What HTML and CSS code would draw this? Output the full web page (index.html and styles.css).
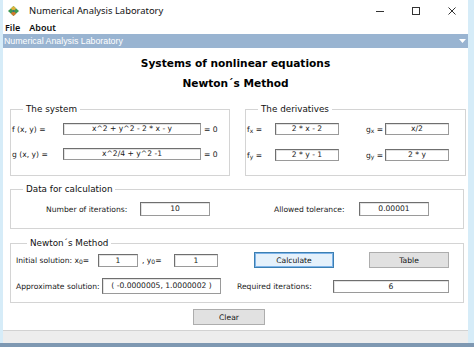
FILE: index.html
```html
<!DOCTYPE html>
<html lang="en">
<head>
    <meta charset="UTF-8">
    <title>Numerical Analysis Laboratory</title>
    <link rel="stylesheet" href="styles.css">
</head>
<body>
    <div class="frame">
        <div class="titlebar">
            <svg class="app-icon" width="11" height="10" viewBox="0 0 11 10">
                <polygon points="5.5,0 11,5 5.5,10 0,5" fill="#3f9a52"/>
                <polygon points="5.5,0 8.2,2.5 5.5,5 2.8,2.5" fill="#e0b43c"/>
                <polygon points="5.5,5 8.2,7.5 5.5,10 2.8,7.5" fill="#d27a2e"/>
                <polygon points="5.5,3.8 6.7,5 5.5,6.2 4.3,5" fill="#2f6e8c"/>
            </svg>
            <span class="app-title">Numerical Analysis Laboratory</span>
            <div class="win-controls">
                <svg width="10" height="10" viewBox="0 0 10 10"><line x1="1" y1="5.5" x2="9" y2="5.5" stroke="#333" stroke-width="1"/></svg>
                <svg width="10" height="10" viewBox="0 0 10 10"><rect x="1.5" y="1.5" width="7" height="7" fill="none" stroke="#333" stroke-width="1"/></svg>
                <svg width="10" height="10" viewBox="0 0 10 10"><path d="M1.5 1.5 L8.5 8.5 M8.5 1.5 L1.5 8.5" stroke="#333" stroke-width="1"/></svg>
            </div>
        </div>

        <div class="menubar">
            <span>File</span>
            <span>About</span>
        </div>

        <div class="caption">
            <span>Numerical Analysis Laboratory</span>
            <svg width="7" height="5" viewBox="0 0 7 5"><polygon points="0,0 7,0 3.5,4" fill="#fff"/></svg>
        </div>

        <div class="main">
            <h1>Systems of nonlinear equations</h1>
            <h2>Newton´s Method</h2>

            <div class="top-row">
                <fieldset class="group system">
                    <legend>The system</legend>
                    <div class="row first">
                        <span class="lbl">f (x, y) =</span>
                        <span class="box">x^2 + y^2 - 2 * x - y</span>
                        <span class="suffix">= 0</span>
                    </div>
                    <div class="row second">
                        <span class="lbl">g (x, y) =</span>
                        <span class="box">x^2/4 + y^2 -1</span>
                        <span class="suffix">= 0</span>
                    </div>
                </fieldset>

                <fieldset class="group derivs">
                    <legend>The derivatives</legend>
                    <div class="row first">
                        <span class="lbl">f<sub>x</sub> =</span>
                        <span class="box">2 * x - 2</span>
                        <span class="lbl lbl-g">g<sub>x</sub> =</span>
                        <span class="box">x/2</span>
                    </div>
                    <div class="row second">
                        <span class="lbl">f<sub>y</sub> =</span>
                        <span class="box">2 * y - 1</span>
                        <span class="lbl lbl-g">g<sub>y</sub> =</span>
                        <span class="box">2 * y</span>
                    </div>
                </fieldset>
            </div>

            <fieldset class="group data">
                <legend>Data for calculation</legend>
                <div class="row">
                    <span class="lbl lbl-iter">Number of iterations:</span>
                    <span class="box box-iter">10</span>
                    <span class="lbl lbl-tol">Allowed tolerance:</span>
                    <span class="box box-tol">0.00001</span>
                </div>
            </fieldset>

            <fieldset class="group newton">
                <legend>Newton´s Method</legend>
                <div class="row first">
                    <span class="lbl lbl-init">Initial solution: x<sub>0</sub>=</span>
                    <span class="box box-x0">1</span>
                    <span class="lbl lbl-y0">, y<sub>0</sub>=</span>
                    <span class="box box-y0">1</span>
                    <button class="btn btn-calc">Calculate</button>
                    <button class="btn btn-table">Table</button>
                </div>
                <div class="row second">
                    <span class="lbl lbl-approx">Approximate solution:</span>
                    <span class="box box-approx">( -0.0000005, 1.0000002 )</span>
                    <span class="lbl lbl-req">Required iterations:</span>
                    <span class="box box-req">6</span>
                </div>
            </fieldset>

            <div class="clear-row">
                <button class="btn btn-clear">Clear</button>
            </div>
        </div>

        <div class="statusbar"></div>
    </div>
    <div class="bottom-line"></div>
</body>
</html>
```

FILE: styles.css
```css
html, body {
    margin: 0;
    padding: 0;
}

body {
    width: 474px;
    height: 347px;
    overflow: hidden;
    background: #d6ecf8;
    font-family: "DejaVu Sans", Verdana, sans-serif;
    color: #1a1a1a;
}

.frame {
    display: flex;
    flex-direction: column;
    height: 343px;
    margin-left: 3px;
    margin-right: 6px;
    background: #fff;
}

/* window title bar */
.titlebar {
    display: flex;
    align-items: center;
    height: 21px;
    padding-left: 5px;
    font-family: "Noto Sans", sans-serif;
    font-size: 9.4px;
    color: #111;
}

.app-icon {
    margin-right: 10px;
}

.app-title {
    flex: 1;
}

.win-controls {
    display: flex;
    gap: 26px;
    padding-right: 11px;
}

.menubar {
    display: flex;
    gap: 9px;
    height: 13px;
    align-items: center;
    padding-left: 2px;
    font-family: "Noto Sans", sans-serif;
    font-size: 9px;
    font-weight: 600;
    color: #111;
}

.caption {
    display: flex;
    align-items: center;
    justify-content: space-between;
    height: 14px;
    padding: 0 2px 0 1px;
    background: #99b4d1;
    color: #fff;
    font-family: "Liberation Sans", Arial, sans-serif;
    font-size: 8.8px;
}

/* form area */
.main {
    flex: 1;
    display: flex;
    flex-direction: column;
    font-size: 7.6px;
}

h1, h2 {
    margin: 0;
    text-align: center;
    font-size: 10.6px;
    line-height: 14px;
    font-weight: bold;
    color: #000;
}

h1 {
    margin-top: 8px;
}

h2 {
    margin-top: 6px;
}

.top-row {
    display: flex;
    margin-top: 14px;
}

.group {
    box-sizing: border-box;
    margin: 0 0 0 7px;
    padding: 0 0 0 1px;
    border: 1px solid #d4d4d4;
    min-width: 0;
}

.group legend {
    margin-left: 11px;
    padding: 0 3px;
    font-size: 8.8px;
    line-height: 10px;
    color: #111;
}

.row {
    display: flex;
    align-items: center;
}

.lbl {
    white-space: nowrap;
}

sub {
    font-size: 6px;
    vertical-align: -1px;
}

.box {
    box-sizing: border-box;
    height: 12px;
    line-height: 10px;
    text-align: center;
    white-space: nowrap;
    border: 1px solid #9a9a9a;
    border-top-color: #6f6f6f;
    border-left-color: #6f6f6f;
    box-shadow: inset 1px 1px 0 #e2e2e2;
    background: #fff;
}

/* the system */
.system {
    width: 220px;
    height: 72px;
}

.system .row.first {
    margin-top: 9px;
}

.system .row.second {
    margin-top: 13px;
}

.system .lbl {
    width: 51px;
}

.system .box {
    width: 138px;
}

.system .suffix {
    margin-left: 3px;
}

/* the derivatives */
.derivs {
    width: 221px;
    height: 72px;
    margin-left: 15px;
}

.derivs .row.first {
    margin-top: 9px;
}

.derivs .row.second {
    margin-top: 14px;
}

.derivs .lbl {
    width: 28px;
}

.derivs .lbl-g {
    width: 19px;
    margin-left: 27px;
}

.derivs .box {
    width: 64px;
}

/* data for calculation */
.data {
    width: 454px;
    height: 45px;
    margin-top: 8px;
}

.data .row {
    margin-top: 8px;
}

.data .box {
    height: 14px;
    line-height: 12px;
    width: 70px;
}

.lbl-iter {
    width: 94px;
    margin-left: 34px;
}

.lbl-tol {
    width: 85px;
    margin-left: 64px;
}

/* newton's method */
.newton {
    width: 454px;
    height: 65px;
    margin-top: 9px;
    padding-left: 5px;
}

.newton .row.first {
    margin-top: 4px;
}

.newton .row.second {
    margin-top: 10px;
}

.newton .box {
    height: 13px;
    line-height: 11px;
}

.lbl-init {
    width: 82px;
}

.box-x0 {
    width: 40px;
}

.lbl-y0 {
    width: 32px;
    margin-left: 4px;
}

.box-y0 {
    width: 44px;
}

.lbl-approx {
    width: 86px;
}

.newton .box-approx {
    width: 119px;
    height: 16px;
    line-height: 14px;
}

.lbl-req {
    width: 96px;
    margin-left: 16px;
}

.box-req {
    width: 116px;
}

.btn {
    box-sizing: border-box;
    height: 16px;
    padding: 0;
    font-family: "DejaVu Sans", Verdana, sans-serif;
    font-size: 7.6px;
    color: #111;
    background: #e1e1e1;
    border: 1px solid #adadad;
    border-radius: 0;
}

.btn-calc {
    width: 80px;
    margin-left: 36px;
    background: #e5f1fb;
    border: 1px solid #3c7fb1;
    box-shadow: inset 0 0 0 1px #7eb4ea;
}

.btn-table {
    width: 80px;
    margin-left: 35px;
}

.clear-row {
    display: flex;
    margin-top: 6px;
}

.btn-clear {
    width: 72px;
    margin-left: 190px;
}

.statusbar {
    height: 12px;
    margin-top: auto;
    background: #ededed;
    border-top: 1px solid #d2d2d2;
}

.bottom-line {
    height: 4px;
    background: #7e98b2;
}
```
